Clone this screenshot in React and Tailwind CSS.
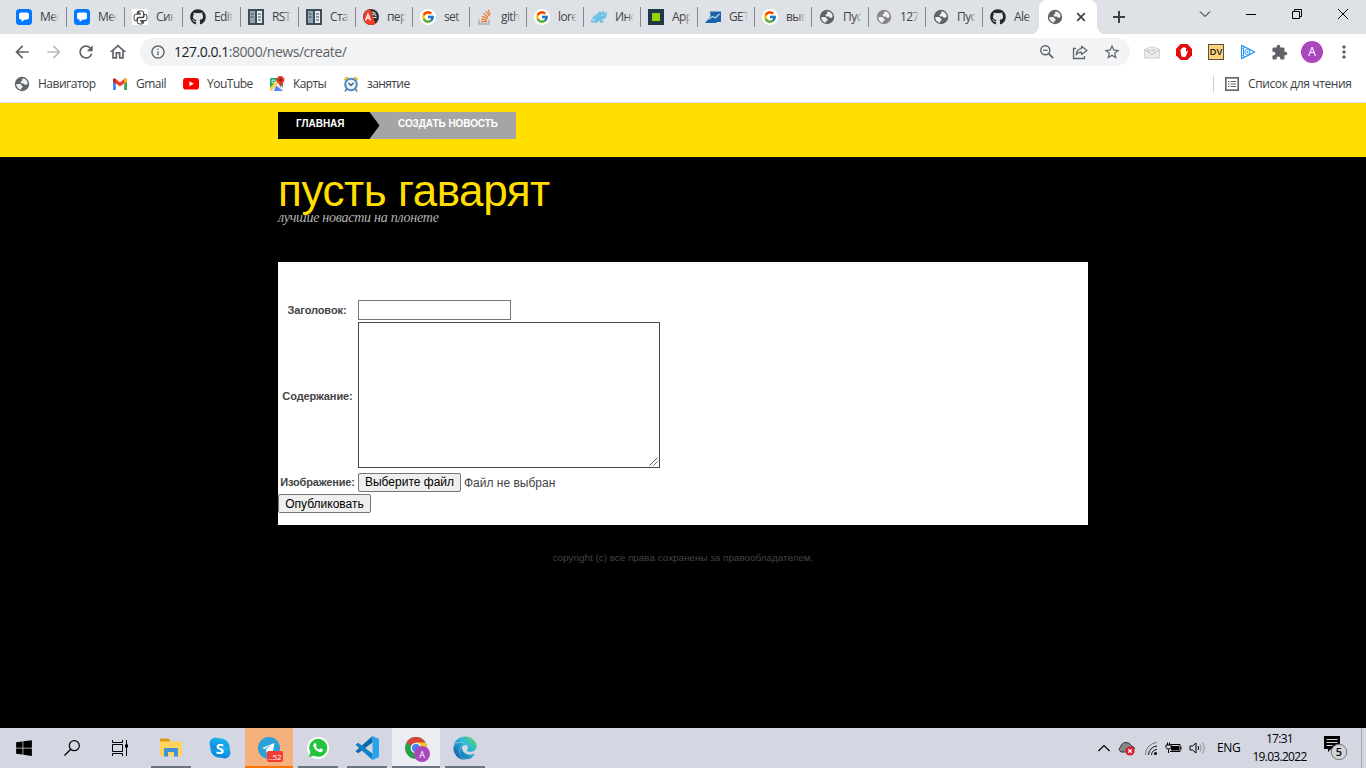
import { FcGoogle } from "react-icons/fc";
import { FaPython, FaWindows, FaEdge, FaGithub } from "react-icons/fa";
import {
  MdArrowBack, MdArrowForward, MdRefresh, MdOutlineHome, MdInfoOutline,
  MdStarBorder, MdExtension, MdMoreVert,
} from "react-icons/md";

function Globe({ color = "#5f6368" }) {
  return (
    <svg width="16" height="16" viewBox="0 0 16 16" className="block shrink-0">
      <circle cx="8" cy="8" r="7.2" fill={color} />
      <path d="M8.2 2.5C10.800 2.200 13.300 4.200 13.700 7.300L12.600 8.800H10.800L9.800 7.400H7.200L6.400 5.800 8.200 4.800Z" fill="#fff" fillOpacity=".9" />
      <path d="M2.300 8H6.200L8.600 10.200V11.800H7.200V13.700C4.600 13.400 2.300 11.200 2.300 8Z" fill="#fff" fillOpacity=".9" />
    </svg>
  );
}

function Chat() {
  return (
    <svg width="16" height="16" viewBox="0 0 16 16" className="block shrink-0">
      <rect width="16" height="16" rx="3.5" fill="#0078ff" />
      <path d="M5 3.6h6q2 0 2 2v3q0 2-2 2H8.8L5.6 13v-2.4H5q-2 0-2-2v-3q0-2 2-2z" fill="#fff" />
    </svg>
  );
}

function Book() {
  return (
    <svg width="16" height="16" viewBox="0 0 16 16" className="block shrink-0">
      <rect width="16" height="16" fill="#3e4d57" />
      <rect x="2" y="2" width="5" height="12" fill="#92a4af" />
      <rect x="9" y="2" width="5" height="12" fill="#e7ecef" />
      <path d="M3 5h2.500M3 8h2.500M10 5h3M10 8h3M10 11h3" stroke="#3e4d57" strokeWidth="1.200" />
    </svg>
  );
}

function RedBall() {
  return (
    <svg width="16" height="16" viewBox="0 0 16 16" className="block shrink-0">
      <circle cx="8" cy="8" r="8" fill="#33302f" />
      <path d="M7 0A8 8 0 1 0 12.500 14.700z" fill="#f23c28" />
      <path d="M2.500 11.500 5 5l2.500 6.500M3.500 9.200h3" stroke="#fff" strokeWidth="1.300" fill="none" />
      <path d="M8.500 3.200h2.400v2.500H9M12 3.500v3l1.500.4M10 8.500h3.500" stroke="#ddd" strokeWidth="1" fill="none" />
    </svg>
  );
}

function GoogleDot() {
  return (
    <span className="flex size-4 shrink-0 items-center justify-center rounded-full bg-white">
      <FcGoogle size={14} />
    </span>
  );
}

function Rhino() {
  return (
    <svg width="16" height="16" viewBox="0 0 16 16" className="block shrink-0">
      <path d="M0 13.500C.2 9.500 2.500 6.200 6 5.600c.6-1.800 2-3 3.400-3.400L10 4l2.200-2.600 1 2.300L16 3.400 15.200 8c-1 2-2.600 2.400-4.200 2.300l1.800 3.400H9.400L8 11.600l-1.700 2.100z" fill="#6fc1e6" />
      <path d="M1 10.500l3 .8M10.500 6h2" stroke="#d7effa" strokeWidth="1" />
    </svg>
  );
}

function GreenSquare() {
  return (
    <svg width="16" height="16" viewBox="0 0 16 16" className="block shrink-0">
      <rect width="16" height="16" fill="#22364a" />
      <rect x="4" y="4" width="8" height="8" fill="#97cf00" />
    </svg>
  );
}

function BlueChart() {
  return (
    <svg width="16" height="16" viewBox="0 0 16 16" className="block shrink-0">
      <path d="M5 2.500h11V13H12l-1 1H0L5.500 7z" fill="#1a63a8" />
      <path d="M3 10.500l4.500-3 2.600 1.500L14.500 5" stroke="#b9d7ee" strokeWidth="1.300" fill="none" />
    </svg>
  );
}

function PyBox() {
  return (
    <span className="flex size-4 shrink-0 items-center justify-center bg-white">
      <FaPython size={15} color="#fff" stroke="#4d4d4d" strokeWidth={36} />
    </span>
  );
}

function Stack() {
  return (
    <svg width="16" height="16" viewBox="0 0 16 16" className="block shrink-0">
      <path d="M2 10.500V15h10v-4.500" stroke="#a9adb1" strokeWidth="1.400" fill="none" />
      <path d="M4 12.600h6M4.200 10.200l6 .9M4.800 7.400l5.800 2M6.400 4.400l4.800 3.800M8.800 2l3.600 5M11.400.6l1.400 5.400" stroke="#f0792a" strokeWidth="1.200" fill="none" />
    </svg>
  );
}

const Hub = () => <FaGithub size={16} color="#24292f" className="shrink-0" />;

const tabs = [
  [<Chat />, "Мес", "w-[58px]"],
  [<Chat />, "Мес", "w-[58px]"],
  [<PyBox />, "Син", "w-[58px]"],
  [<Hub />, "Edit", "w-[58px]"],
  [<Book />, "RST", "w-[58px]"],
  [<Book />, "Ста", "w-[57px]"],
  [<RedBall />, "пер", "w-[57px]"],
  [<GoogleDot />, "set", "w-[57px]"],
  [<Stack />, "gith", "w-[57px]"],
  [<GoogleDot />, "lore", "w-[57px]"],
  [<Rhino />, "Инс", "w-[57px]"],
  [<GreenSquare />, "App", "w-[57px]"],
  [<BlueChart />, "GET", "w-[57px]"],
  [<GoogleDot />, "выв", "w-[57px]"],
  [<Globe />, "Пус", "w-[57px]"],
  [<Globe color="#858585" />, "127", "w-[57px]"],
  [<Globe />, "Пус", "w-[57px]"],
  [<Hub />, "Ale", "w-[56px]"],
];

function TabStrip() {
  return (
    <div className="flex h-[34px] bg-[#dee1e6] pl-[9px]">
      {tabs.map(([icon, text, width], i) => (
        <div key={i} className={`flex shrink-0 items-center pl-[7px] ${width}`}>
          {icon}
          <div className="relative ml-[8px] w-[19px] shrink-0 overflow-hidden text-[12px] leading-[16px] tracking-[-0.6px] whitespace-nowrap text-[#3f4347]">
            {text}
            <span className="absolute inset-y-0 right-0 w-[7px] bg-linear-to-r from-[#dee1e600] to-[#dee1e6]" />
          </div>
          {i < tabs.length - 1 && <div className="ml-auto h-5 w-px bg-[#85888d]" />}
        </div>
      ))}
      <div className="relative flex w-[58px] shrink-0 items-center rounded-t-lg bg-white pl-2">
        <svg width="8" height="8" viewBox="0 0 8 8" className="absolute bottom-0 -left-2">
          <path d="M8 0v8H0A8 8 0 0 0 8 0z" fill="#fff" />
        </svg>
        <svg width="8" height="8" viewBox="0 0 8 8" className="absolute -right-2 bottom-0">
          <path d="M0 0v8h8A8 8 0 0 1 0 0z" fill="#fff" />
        </svg>
        <Globe />
        <svg width="10" height="10" viewBox="0 0 10 10" className="ml-[13px]">
          <path d="M1.200 1.200l7.600 7.600M8.800 1.200L1.200 8.800" stroke="#3c4043" strokeWidth="1.700" />
        </svg>
      </div>
      <svg width="12" height="12" viewBox="0 0 12 12" className="mt-[11px] ml-4 shrink-0">
        <path d="M6 0v12M0 6h12" stroke="#3c4043" strokeWidth="2" />
      </svg>
      <div className="mt-2 ml-auto flex h-3 shrink-0 items-center gap-[34px] pr-[17px]">
        <svg width="12" height="12" viewBox="0 0 12 12"><path d="M1 3.500l5 5 5-5" stroke="#000" fill="none" /></svg>
        <svg width="12" height="12" viewBox="0 0 12 12"><path d="M1 6.500h10" stroke="#000" /></svg>
        <svg width="12" height="12" viewBox="0 0 12 12"><path d="M1.500 3.500h7v7h-7zM3.500 3.500v-2h7v7h-2" stroke="#000" fill="none" /></svg>
        <svg width="12" height="12" viewBox="0 0 12 12"><path d="M1 1l10 10M11 1L1 11" stroke="#000" fill="none" /></svg>
      </div>
    </div>
  );
}

function Toolbar() {
  return (
    <div className="flex h-9 items-center pl-3">
      <div className="flex w-32 items-center gap-3 text-[#5f6368]">
        <MdArrowBack size={20} />
        <MdArrowForward size={20} color="#babcbe" />
        <MdRefresh size={20} />
        <MdOutlineHome size={20} />
      </div>
      <div className="flex h-7 w-[990px] items-center rounded-full bg-[#f1f3f4] pr-[9px] pl-[10px] text-[#5f6368]">
        <MdInfoOutline size={16} />
        <div className="ml-2 text-[14px] leading-5 tracking-[-0.47px] whitespace-nowrap">
          <span className="text-[#202124]">127.0.0.1</span>:8000/news/create/
        </div>
        <div className="ml-auto flex items-center">
          <svg width="14" height="14" viewBox="0 0 14 14">
            <circle cx="5.300" cy="5.300" r="4.500" stroke="#5f6368" strokeWidth="1.400" fill="none" />
            <path d="M8.600 8.600L13.200 13.200" stroke="#5f6368" strokeWidth="1.700" />
            <path d="M3 5.300h4.600" stroke="#5f6368" strokeWidth="1.200" />
          </svg>
          <svg width="16" height="16" viewBox="0 0 16 16" className="ml-[18px]">
            <path d="M4 4.500H1.500v10h11V12" stroke="#5f6368" strokeWidth="1.300" fill="none" />
            <path d="M9.500 2.200L15 6.400 9.500 10.600V8.200C7.200 8.200 5.200 9 4.200 11 4.300 7.600 6.500 5 9.500 4.600z" stroke="#5f6368" strokeWidth="1.200" fill="none" strokeLinejoin="round" />
          </svg>
          <MdStarBorder size={18} className="ml-[15px]" />
        </div>
      </div>
      <div className="ml-[14px] flex items-center">
        <svg width="16" height="16" viewBox="0 0 16 16">
          <path d="M.5 5.500L8 2.500l7.500 3v8.500H.5z" fill="#ececec" stroke="#d4d4d4" />
          <path d="M.5 5.500L8 10.500l7.500-5M3 7l3-1M7 7l4-1" stroke="#bdbdbd" fill="none" />
        </svg>
        <svg width="16" height="16" viewBox="0 0 16 16" className="ml-4">
          <path d="M4.700 0h6.600L16 4.700v6.600L11.300 16H4.700L0 11.300V4.700z" fill="#e30b0b" />
          <path d="M4.600 8V5.200q.7-.9 1.300 0V4q.7-.9 1.400 0v-.7q.7-.9 1.400 0V4q.7-.9 1.400 0v4l.9-1.200q1-.3.9.5L10 12q-.4 1-1.500 1H7q-1.200 0-1.700-1.200z" fill="#fff" />
        </svg>
        <div className="ml-4 flex size-4 items-center justify-center border border-[#5c513b] bg-[#fcd27c] text-[9.5px] leading-none font-semibold text-[#222]">DV</div>
        <svg width="16" height="16" viewBox="0 0 16 16" className="ml-4">
          <path d="M1.500 1.200L14.800 8 1.500 14.800z" stroke="#2196f3" fill="none" strokeWidth="1.100" strokeLinejoin="round" />
          <path d="M2 4.500L5 3M2 11.500L5 13M3.500 4.200v7.600" stroke="#2196f3" fill="none" />
          <circle cx="7.500" cy="8" r="2.600" stroke="#2196f3" fill="none" />
          <circle cx="7.500" cy="8" r=".9" fill="#2196f3" />
        </svg>
        <MdExtension size={17} color="#5f6368" className="ml-[15px]" />
        <div className="ml-[13px] flex size-[22px] items-center justify-center rounded-full bg-[#ab47bc] text-[12px] leading-none text-white">A</div>
        <MdMoreVert size={20} color="#5f6368" className="ml-[11px]" />
      </div>
    </div>
  );
}

function Bookmarks() {
  return (
    <div className="flex h-8 items-center pr-[14px] pb-[4px] pl-[14px] text-[12px] leading-4 tracking-[-0.5px] whitespace-nowrap text-[#3c4043]">
      <Globe />
      <span className="ml-2 w-[74px]">Навигатор</span>
      <svg width="16" height="12" viewBox="0 0 16 12">
        <path d="M1 12V2.500h2.800V12z" fill="#4285f4" />
        <path d="M12.200 12V2.500H15V12z" fill="#34a853" />
        <path d="M1 3.500V1.200Q1.800 0 3.200.6L8 4.300 12.800.6Q14.200 0 15 1.200v2.300L8 8.500z" fill="#ea4335" />
        <path d="M1 1.600v2l2.800 2.100V1.200Q1.500-.4 1 1.600z" fill="#c5221f" />
        <path d="M15 1.600v2l-2.800 2.100V1.200Q14.500-.4 15 1.600z" fill="#fbbc04" />
      </svg>
      <span className="ml-2 w-[47px]">Gmail</span>
      <svg width="16" height="12" viewBox="0 0 16 12">
        <rect width="16" height="11.500" rx="2.800" fill="#f00" />
        <path d="M6.400 3.200v5.100L10.800 5.750z" fill="#fff" />
      </svg>
      <span className="ml-2 w-[62px]">YouTube</span>
      <svg width="16" height="16" viewBox="0 0 16 16">
        <rect x="1" y="2" width="13" height="13" rx="1.500" fill="#1fa463" />
        <path d="M1 14L9 6l5.500 6v1.500Q14.500 15 13 15H2z" fill="#e8eaed" />
        <path d="M7 9.500L14 15H5z" fill="#4c8bf5" />
        <path d="M1 11.500l8-8 1.500 2L2 15Q1 15 1 13.500z" fill="#fdd23c" />
        <path d="M11.500 0a3.900 3.900 0 0 1 3.900 4c0 2.500-3 3.500-3.900 7.500C10.600 7.500 7.600 6.500 7.600 4a3.900 3.900 0 0 1 3.900-4z" fill="#e0392f" />
        <circle cx="11.500" cy="3.900" r="1.400" fill="#7b1c15" />
        <circle cx="4.500" cy="5.500" r="1.600" stroke="#fff" fill="none" />
      </svg>
      <span className="ml-2 w-[50px] tracking-[-0.6px]">Карты</span>
      <svg width="16" height="16" viewBox="0 0 16 16">
        <path d="M1 4Q1 1 4.500.8L6 2 2.500 5.500zM15 4Q15 1 11.500.8L10 2l3.500 3.500z" fill="#f0b93a" />
        <path d="M3.500 13L2 15.500M12.500 13l1.500 2.500" stroke="#777" strokeWidth="1.500" />
        <circle cx="8" cy="8.500" r="5.800" fill="#eaf4fc" stroke="#4c88c4" strokeWidth="2" />
        <path d="M5.500 7L8 9.500 10.500 7" stroke="#345" fill="none" strokeWidth="1.200" />
      </svg>
      <span className="ml-2 tracking-[-0.6px]">занятие</span>
      <div className="ml-auto h-4 w-px bg-[#cfd1d4]" />
      <svg width="14" height="14" viewBox="0 0 14 14" className="ml-[11px]">
        <rect x=".8" y=".8" width="12.400" height="12.400" stroke="#5f6368" strokeWidth="1.600" fill="none" />
        <path d="M3 4.500h1.500M3 7h1.500M3 9.500h1.500M5.500 4.500H11M5.500 7H11M5.500 9.500H11" stroke="#5f6368" strokeWidth="1.200" />
      </svg>
      <span className="ml-[9px] w-[104px] tracking-[-0.38px]">Список для чтения</span>
    </div>
  );
}

function Page() {
  return (
    <div className="flex h-[625px] flex-col items-center bg-black font-['Liberation_Sans',Arial,sans-serif]">
      <div className="flex h-[54px] w-full justify-center bg-[#ffde00] pt-[9px]">
        <div className="flex w-[810px]">
          <div className="flex h-[27px] w-[238px] bg-[#a5a5a5] text-[10px] leading-[24px] font-bold whitespace-nowrap text-white">
            <div className="w-[91px] bg-black pl-[18px]">ГЛАВНАЯ</div>
            <svg width="11" height="27" viewBox="0 0 11 27"><path d="M0 0h.5L10.500 13.500.5 27H0z" fill="#000" /></svg>
            <div className="pl-[18px] tracking-[-0.07px]">СОЗДАТЬ НОВОСТЬ</div>
          </div>
        </div>
      </div>
      <div className="h-[105px] w-[810px] pt-[14px]">
        <h1 className="text-[44px] leading-[40px] tracking-[-0.44px] whitespace-nowrap text-[#ffde00]">пусть гаварят</h1>
        <p className="-mt-px font-['Liberation_Serif','Times_New_Roman',serif] text-[14px] leading-4 tracking-[-0.25px] whitespace-nowrap text-[#b4b4b4] italic">лучшие новасти на плонете</p>
      </div>
      <div className="flex h-[263px] w-[810px] flex-col bg-white pt-[38px] text-[#444]">
        <div className="flex h-5 items-center">
          <b className="w-20 pr-[2px] text-center text-[11px] tracking-[-0.1px]">Заголовок:</b>
          <input className="h-5 w-[153px] border border-[#767676] bg-white" />
        </div>
        <div className="mt-[2px] flex h-[146px] items-center">
          <b className="w-20 pt-[2px] pr-[1px] text-center text-[11px] tracking-[-0.1px] whitespace-nowrap">Содержание:</b>
          <div className="flex h-[146px] w-[302px] items-end justify-end border border-[#4a4a4a] p-px">
            <svg width="9" height="9" viewBox="0 0 9 9"><path d="M.5 8.500l8-8M4.500 8.500l4-4" stroke="#555" strokeWidth=".9" /></svg>
          </div>
        </div>
        <div className="mt-[5px] flex h-[19px] items-center whitespace-nowrap">
          <b className="w-20 pr-px text-center text-[11px] tracking-[-0.17px]">Изображение:</b>
          <button className="h-[19px] w-[103px] rounded-[2px] border border-[#767676] bg-[#efefef] pb-px text-[12px] leading-[15px] text-black">Выберите файл</button>
          <span className="ml-[3px] text-[12px]">Файл не выбран</span>
        </div>
        <button className="mt-[2px] h-[19px] w-[93px] rounded-[2px] border border-[#767676] bg-[#efefef] text-[12px] leading-[16px] whitespace-nowrap text-black">Опубликовать</button>
      </div>
      <div className="mt-[26px] text-[9.9px] leading-[14px] whitespace-nowrap text-[#444]">copyright (c) все права сохранены за правообладателем.</div>
    </div>
  );
}

function Slot({ children, line, className = "" }) {
  return (
    <div className={`flex h-10 w-12 shrink-0 flex-col items-center ${className}`}>
      <div className="flex h-[38px] items-center justify-center pt-[2px]">{children}</div>
      <div className={`h-[2px] ${line || "w-10"}`} />
    </div>
  );
}

function Taskbar() {
  return (
    <div className="flex h-10 bg-[#d4d7e2] text-black">
      <Slot><FaWindows size={18} /></Slot>
      <Slot>
        <svg width="16" height="16" viewBox="0 0 16 16"><circle cx="10.300" cy="5.700" r="5" stroke="#000" strokeWidth="1.200" fill="none" /><path d="M6.800 9.200L.5 15.500" stroke="#000" strokeWidth="1.300" /></svg>
      </Slot>
      <Slot className="mr-[3px]">
        <svg width="16" height="16" viewBox="0 0 16 16"><path d="M.5 0v2.500h10V0M.5 16v-2.500h10V16M.5 4.500h10v7H.5zM14.500 0v16" stroke="#000" fill="none" /><rect x="13" y="4.500" width="3" height="3" /></svg>
      </Slot>
      <Slot className="mr-px" line="w-10 bg-[#6a7480]">
        <svg width="22" height="20" viewBox="0 0 22 20">
          <path d="M0 1.500Q0 .5 1 .5h7.500l1.500 2v3H0z" fill="#dd9a10" />
          <path d="M0 3.500h21q1 0 1 1V17q0 1-1 1H0z" fill="#ffd35c" />
          <path d="M4 18.500V11q0-1 1-1h12q1 0 1 1v7.500h-4V14H8v4.500z" fill="#3b92d9" />
        </svg>
      </Slot>
      <Slot className="mr-px">
        <svg width="22" height="22" viewBox="0 0 22 22">
          <defs><linearGradient id="sky" x1="0" y1="0" x2="0" y2="1"><stop stopColor="#1ab5ef" /><stop offset="1" stopColor="#0b84dc" /></linearGradient></defs>
          <g fill="url(#sky)"><circle cx="11" cy="11" r="9.800" /><circle cx="6.500" cy="6.500" r="6" /><circle cx="15.500" cy="15.500" r="6" /></g>
          <text x="11" y="16.500" textAnchor="middle" fill="#fff" fontSize="15" fontWeight="700" fontFamily="Open Sans, sans-serif">S</text>
        </svg>
      </Slot>
      <Slot className="bg-[#f5b07c]" line="w-12 bg-[#fb7304]">
        <div className="relative">
          <svg width="22" height="22" viewBox="0 0 22 22">
            <circle cx="11" cy="11" r="11" fill="#2ba0da" />
            <path d="M4 11l12.500-5-2 11-4-3-2 2-.5-3.500 5.500-5-7 4.500z" fill="#fff" />
          </svg>
          <span className="absolute top-[14px] left-[9px] flex h-[11px] w-4 items-center justify-center rounded-[2px] bg-[#f23c34] text-[8px] leading-none text-white">..52</span>
        </div>
      </Slot>
      <Slot className="ml-px" line="w-10 bg-[#6a7480]">
        <div className="flex size-[22px] items-center justify-center rounded-full bg-white">
          <svg width="20" height="20" viewBox="0 0 20 20"><path d="M1 19l1.400-4.700A9 9 0 1 1 5.800 17.700z" fill="#25c33f" /><path d="M6.500 5.300q1-.8 1.500.4l.6 1.500q0 .5-.8 1.200 1.200 2.200 3.400 3.100l1-1.100q.3-.2.700 0l1.800.9q.4.300.2 1-.6 1.900-2.500 1.900Q9 14 6.200 10q-2-3 .3-4.700z" fill="#fff" /></svg>
        </div>
      </Slot>
      <Slot className="ml-px" line="w-10 bg-[#6a7480]">
        <svg width="24" height="24" viewBox="0 0 24 24">
          <path d="M.5 15.300L17.500 0v6.500L3.200 17.300z" fill="#0b68ac" />
          <path d="M.5 8.700L3.200 6.700 17.500 17.500V24z" fill="#1180cb" />
          <path d="M17.500 0L24 3v18l-6.500 3z" fill="#2aa2ee" />
        </svg>
      </Slot>
      <Slot className="ml-px bg-[#ecedf2]" line="w-12 bg-[#6a7480]">
        <div className="relative">
          <svg width="22" height="22" viewBox="0 0 22 22">
            <circle cx="11" cy="11" r="11" fill="#2c9e4b" />
            <path d="M11 11L1.500 5.500A11 11 0 0 1 20.500 5.500z" fill="#dc4437" />
            <path d="M11 11V5.500h9.500A11 11 0 0 1 11 22z" fill="#fbc926" />
            <circle cx="11" cy="11" r="5.300" fill="#fff" /><circle cx="11" cy="11" r="4.200" fill="#4285f4" />
          </svg>
          <span className="absolute top-[9px] left-[9px] flex size-4 items-center justify-center rounded-full bg-[#ab47bc] text-[9px] leading-none text-white">A</span>
        </div>
      </Slot>
      <Slot className="ml-px" line="w-10 bg-[#6a7480]">
        <svg width="0" height="0"><defs><linearGradient id="edge" x1="1" y1="0" x2="0" y2="1"><stop stopColor="#66dd54" /><stop offset=".4" stopColor="#29b8dc" /><stop offset="1" stopColor="#0c50a0" /></linearGradient></defs></svg>
        <FaEdge size={24} fill="url(#edge)" />
      </Slot>
      <div className="ml-auto flex h-10 items-center text-[12px] leading-[18px] whitespace-nowrap">
        <svg width="12" height="8" viewBox="0 0 12 8"><path d="M.5 7L6 1.500 11.500 7" stroke="#000" strokeWidth="1.200" fill="none" /></svg>
        <svg width="18" height="16" viewBox="0 0 18 16" className="ml-2">
          <path d="M3 12Q-.5 9.500 2.500 7 4 2.500 8 2.500q4 0 5.500 3.500 3 .5 3 3L13 12z" fill="#83888b" stroke="#333" />
          <circle cx="12" cy="11" r="4.600" fill="#e11b2d" /><path d="M10.300 9.300l3.400 3.400M13.700 9.300l-3.400 3.400" stroke="#fff" strokeWidth="1.300" />
        </svg>
        <svg width="14" height="14" viewBox="0 0 14 14" className="ml-[8px]">
          <g stroke="#111" fill="none"><path d="M1.500 14A12 12 0 0 1 13 1.500" stroke="#777" /><path d="M4.500 14A9 9 0 0 1 13 5" /><path d="M7.500 14A6 6 0 0 1 13 8.500" /></g><circle cx="11.500" cy="12.500" r="1.500" />
        </svg>
        <svg width="17" height="14" viewBox="0 0 17 14" className="ml-[7px]">
          <path d="M5.500 3.500h9.500v7h-10" stroke="#000" fill="none" /><rect x="6" y="5" width="8" height="4.500" /><rect x="15.500" y="5.500" width="1" height="3" />
          <path d="M1 4h5v2.500Q5.500 8 3.500 8T1 6.500zM2.500 4V1.500M4.500 4V1.500M3.500 8v4" stroke="#000" fill="none" />
        </svg>
        <svg width="17" height="14" viewBox="0 0 17 14" className="ml-[7px]">
          <path d="M1 5h2.500L7 2v10L3.500 9H1z" stroke="#000" fill="none" /><path d="M9 5q1.500 2 0 4" stroke="#000" fill="none" /><path d="M11 3.500q2.500 3.500 0 7M13.500 2q3.500 5 0 10" stroke="#8a8d94" fill="none" />
        </svg>
        <span className="ml-[11px] w-[24px] tracking-[-0.4px]">ENG</span>
        <div className="ml-[11px] w-[55px] text-center tracking-[-0.7px]"><div>17:31</div><div>19.03.2022</div></div>
        <svg width="26" height="26" viewBox="0 0 26 26" className="ml-[16px]">
          <path d="M1 1h16v13H8l-3 3v-3H1z" /><path d="M3.500 4.500h11M3.500 7.500h11M3.500 10.500h6" stroke="#d4d7e2" />
          <circle cx="16" cy="17" r="7.700" fill="#d2d4da" stroke="#777" />
          <text x="16" y="21" textAnchor="middle" fontSize="11" fontWeight="600" fontFamily="Open Sans, sans-serif">5</text>
        </svg>
        <div className="mr-1 ml-[12px] h-10 w-px bg-[#a4a8b0]" />
      </div>
    </div>
  );
}

export default function App() {
  return (
    <div className="flex h-[768px] w-[1366px] flex-col overflow-hidden bg-white font-['Open_Sans','Noto_Sans',sans-serif]">
      <TabStrip />
      <Toolbar />
      <Bookmarks />
      <div className="h-px bg-[#d9dce0]" />
      <Page />
      <Taskbar />
    </div>
  );
}
